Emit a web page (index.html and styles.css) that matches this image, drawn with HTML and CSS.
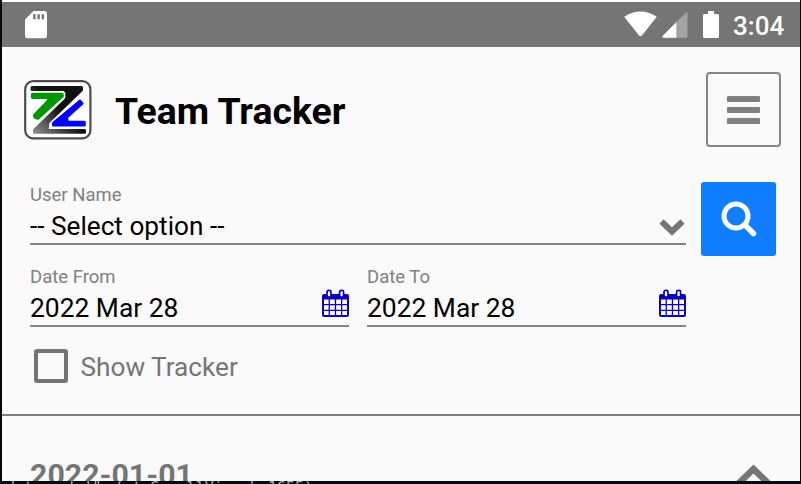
FILE: index.html
```html
<!DOCTYPE html>
<html lang="en">
<head>
<meta charset="utf-8">
<title>Team Tracker</title>
<link rel="stylesheet" href="styles.css">
</head>
<body>
<svg class="defs" width="0" height="0">
  <symbol id="calendar" viewBox="0 0 27 29">
    <path d="M2 5H25Q27 5 27 7V26Q27 28 25 28H2Q0 28 0 26V7Q0 5 2 5Z" fill="#0a00b8"/>
    <path d="M2 10.5h4.6v4.4H2zM7.9 10.5h4.9v4.4H7.9zM14.1 10.5H19v4.4h-4.9zM20.3 10.5H25v4.4h-4.7zM2 16.2h4.6v4.5H2zM7.9 16.2h4.9v4.5H7.9zM14.1 16.2H19v4.5h-4.9zM20.3 16.2H25v4.5h-4.7zM2 22h4.6v4H2zM7.9 22h4.9v4H7.9zM14.1 22H19v4h-4.9zM20.3 22H25v4h-4.7z" fill="#fafafa"/>
    <rect x="5" y="1.4" width="4" height="6.8" rx="1.6" fill="#fafafa" stroke="#0a00b8" stroke-width="1.7"/>
    <rect x="17.6" y="1.4" width="4" height="6.8" rx="1.6" fill="#fafafa" stroke="#0a00b8" stroke-width="1.7"/>
  </symbol>
</svg>
<div class="screen">
  <div class="status">
    <svg class="sd" width="22" height="28" viewBox="0 0 22 28"><path d="M8.5 0H19.5Q22 0 22 2.5V25Q22 27.3 19.5 27.3H2.5Q0 27.3 0 25V8.5Z" fill="#fff"/><path d="M8.2 3.2h2.4v5H8.2zM12.4 3.2h2.4v5h-2.4zM16.6 3.2H19v5h-2.4z" fill="#757575"/></svg>
    <svg class="wifi" width="33" height="26" viewBox="0 0 33 26"><path d="M.6 5.4Q16.500-4.600 32.400 5.400Q32.700 6 32.200 6.600L18 24.400Q16.500 26 15 24.400L.8 6.600Q.3 6 .6 5.400Z" fill="#fff"/></svg>
    <svg class="signal" width="26" height="26" viewBox="0 0 26 26"><path d="M24 .5Q25.500 0 25.500 1.500V24.500Q25.500 25.700 24.300 25.700H1.500Q-.3 25.300 .8 23.800Z" fill="#a3a3a3"/><path d="M14.300 10.300V25.700H1.500Q-.3 25.300 .8 23.800Z" fill="#fff"/></svg>
    <svg class="battery" width="16" height="28" viewBox="0 0 16 28"><path d="M5 0H11V3H14.500Q16 3 16 4.500V25.500Q16 27 14.500 27H1.500Q0 27 0 25.500V4.500Q0 3 1.500 3H5Z" fill="#fff"/></svg>
    <span class="clock">3:04</span>
  </div>
  <header class="header">
    <svg class="logo" width="68" height="60" viewBox="0 0 68 60">
      <defs><linearGradient id="fade" gradientUnits="userSpaceOnUse" x1="12" y1="54" x2="36" y2="30"><stop offset="0" stop-color="#8a8a8a"/><stop offset="1" stop-color="#111"/></linearGradient></defs>
      <rect x="1.200" y="1.200" width="65.200" height="57.200" rx="8" fill="#fff" stroke="#4d4d4d" stroke-width="2.200"/>
      <g stroke-width="3" stroke-linejoin="round">
        <path d="M8 7.500H57.500V10L24 42.500 23 50.500H60.500V52.200H10.500V50L42 19.500 43 12 40 9.500H8Z" fill="url(#fade)" stroke="url(#fade)"/>
        <path d="M8.500 14.200H38L38.500 16L14 38.200Q10.500 38 10.500 35.200L25 20 23.500 17.500H8.500Z" fill="#009600" stroke="#fff" stroke-width="6"/>
        <path d="M8.500 14.200H38L38.500 16L14 38.200Q10.500 38 10.500 35.200L25 20 23.500 17.500H8.500Z" fill="#009600" stroke="#009600"/>
        <path d="M56 21.200L58 23.500 43 37.500 43.500 42.300H60.300V45H29.500V43.200Z" fill="#00f" stroke="#fff" stroke-width="6"/>
        <path d="M56 21.200L58 23.500 42.500 37.500 43.500 42.300H60.300V45H29.500V43.200Z" fill="#00f" stroke="#00f"/>
      </g>
    </svg>
    <h1 class="title">Team Tracker</h1>
    <button class="menu" aria-label="Menu"><span class="bar"></span><span class="bar"></span><span class="bar"></span></button>
  </header>
  <main class="filters">
    <div class="fields">
      <div class="field wide">
        <div class="label">User Name</div>
        <div class="control"><span class="value">-- Select option --</span>
          <svg class="chevron" width="26" height="18" viewBox="0 0 26 18"><path d="M2.500 3.500L13 13.500 23.500 3.500" fill="none" stroke="#757575" stroke-width="6"/></svg></div>
      </div>
      <div class="field">
        <div class="label">Date From</div>
        <div class="control"><span class="value date-value">2022 Mar 28</span><svg class="calendar" width="27" height="29"><use href="#calendar"/></svg></div>
      </div>
      <div class="field">
        <div class="label">Date To</div>
        <div class="control"><span class="value date-value">2022 Mar 28</span><svg class="calendar" width="27" height="29"><use href="#calendar"/></svg></div>
      </div>
    </div>
    <button class="search" aria-label="Search"><svg width="36" height="36" viewBox="0 0 36 36"><circle cx="15" cy="15" r="12" fill="none" stroke="#fff" stroke-width="5"/><path d="M24 24L32.500 32.500" stroke="#fff" stroke-width="5.500" stroke-linecap="round"/></svg></button>
  </main>
  <div class="toggle"><span class="box"></span><span class="toggle-text">Show Tracker</span></div>
  <section class="day">
    <h2 class="date">2022-01-01</h2>
    <svg class="collapse" width="38" height="22" viewBox="0 0 38 22"><path d="M2 21L18.500 5 35 21" fill="none" stroke="#757575" stroke-width="6.500"/></svg>
  </section>
</div>
<div class="console">dotcom.kwWhe(et=ScrollView.h=1655)</div>
</body>
</html>
```
FILE: styles.css
```css
* { box-sizing: border-box; }
body {
  margin: 0;
  width: 801px;
  height: 484px;
  overflow: hidden;
  background: #08090b;
  font-family: Roboto, sans-serif;
}
.defs { display: block; }
.screen {
  height: 481px;
  margin: 0 1px 0 2px;
  border-top: 2px solid #fff;
  background: #fafafa;
  overflow: hidden;
}
.status {
  display: flex;
  align-items: flex-start;
  height: 45px;
  padding: 9px 15px 0 23px;
  background: #757575;
  color: #fff;
}
.wifi { margin-left: auto; }
.signal { margin: 1px 0 0 5px; }
.battery { margin-left: 15px; }
.clock {
  width: 52px;
  margin-left: 14px;
  font-size: 26px;
  font-weight: 500;
  line-height: 30px;
  white-space: nowrap;
}
.header {
  display: flex;
  align-items: center;
  height: 125px;
  padding: 0 19px 0 22px;
}
.title {
  margin: 2px 0 0 23px;
  font-size: 37.4px;
  font-weight: 700;
  line-height: 44px;
}
.menu {
  display: flex;
  flex-direction: column;
  align-items: center;
  justify-content: center;
  gap: 5px;
  width: 75px;
  height: 75px;
  margin-left: auto;
  padding: 0;
  border: 2px solid #858585;
  border-radius: 4px;
  background: transparent;
}
.bar { width: 33px; height: 6px; border-radius: 1px; background: #808080; }
.filters {
  display: flex;
  gap: 15px;
  padding: 9px 24px 0 28px;
}
.fields {
  display: grid;
  grid-template-columns: 319px 319px;
  column-gap: 18px;
  row-gap: 18px;
}
.wide { grid-column: 1 / 3; }
.field { height: 64px; border-bottom: 2px solid #858585; padding-top: 2px; }
.label { color: #808080; font-size: 18.5px; line-height: 24px; }
.control {
  display: flex;
  align-items: center;
  justify-content: space-between;
  height: 35px;
}
.value { font-size: 26.2px; line-height: 30px; color: #000; padding-top: 3px; }
.date-value { font-size: 26.4px; }
.chevron { margin: 4px 1px 0 0; }
.calendar { margin-bottom: 7px; }
.search {
  display: flex;
  align-items: center;
  justify-content: center;
  width: 75px;
  height: 74px;
  margin-top: 1px;
  padding: 0;
  border: 0;
  border-radius: 3px;
  background: #117eff;
}
.toggle {
  display: flex;
  align-items: center;
  gap: 12.5px;
  height: 89px;
  padding: 0 0 9px 32px;
  border-bottom: 2px solid #808080;
}
.box { width: 34px; height: 34px; border: 4px solid #757575; border-radius: 3px; }
.toggle-text { padding-top: 2px; color: #757575; font-size: 26.2px; line-height: 32px; }
.day {
  display: flex;
  justify-content: space-between;
  padding: 41px 27px 0 28px;
}
.date { margin: 0; color: #757575; font-size: 30.3px; font-weight: 700; line-height: 36px; }
.collapse { margin-top: 7px; }
.console {
  height: 3px;
  overflow: hidden;
  padding-left: 6px;
  color: #aab0b0;
  font: 15px/15px "DejaVu Sans Mono", monospace;
}
```
